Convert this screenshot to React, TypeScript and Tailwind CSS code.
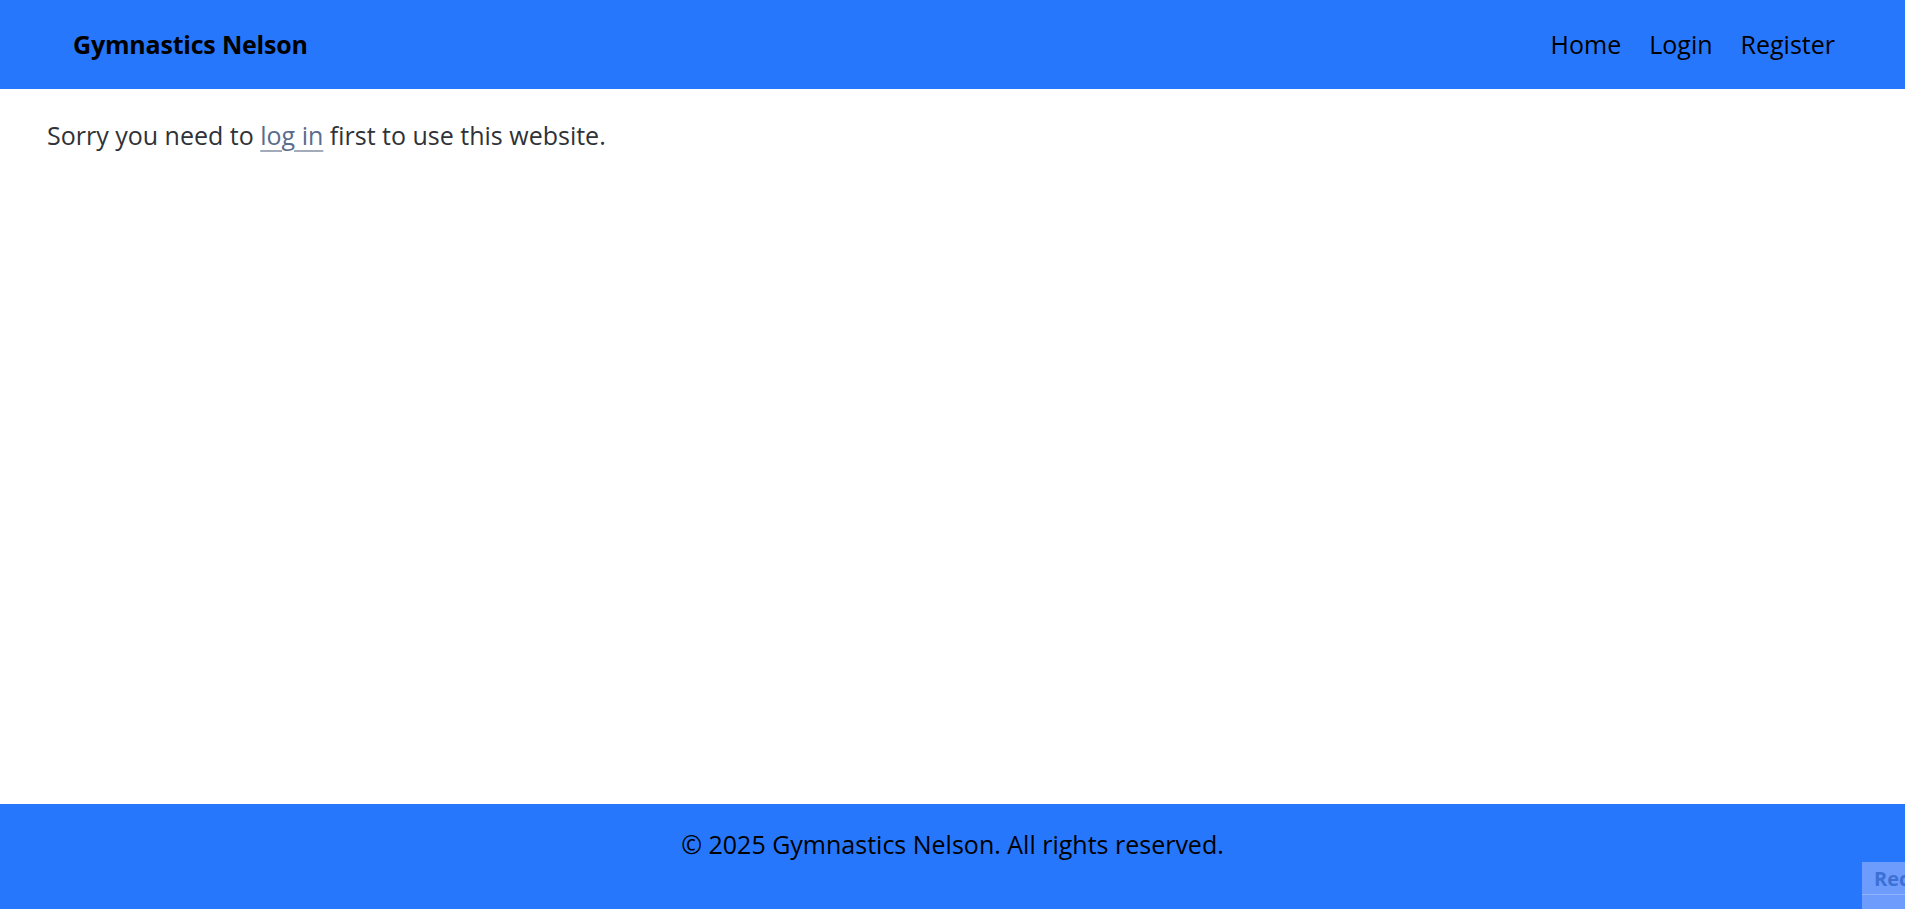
import React from 'react';

const NavLink: React.FC<{ label: string }> = ({ label }) => (
  <a href="#" className="text-black no-underline">
    {label}
  </a>
);

export default function App() {
  return (
    <div className="min-h-screen flex flex-col bg-white font-['Open_Sans',sans-serif]">
      <header className="h-[89px] shrink-0 bg-[#2777fc] flex items-center justify-between pl-[73px] pr-[70px]">
        <div className="text-[25px] font-bold text-black tracking-[-0.2px]">Gymnastics Nelson</div>
        <nav className="flex items-center gap-[28px] text-[25px] text-black">
          <NavLink label="Home" />
          <NavLink label="Login" />
          <NavLink label="Register" />
        </nav>
      </header>

      <main className="flex-1 px-[47px] pt-[27px]">
        <p className="text-[25px] leading-[38px] text-[#2f3237]">
          Sorry you need to{' '}
          <a href="#" className="text-[#5a6c8c] underline decoration-[#a3abbb] underline-offset-[5px]">
            log in
          </a>{' '}
          first to use this website.
        </p>
      </main>

      <footer className="h-[105px] shrink-0 bg-[#2777fc] pt-[21px] text-center">
        <p className="text-[25px] leading-[38px] text-black">© 2025 Gymnastics Nelson. All rights reserved.</p>
      </footer>

      {/* recaptcha badge peeking in from the right edge */}
      <div className="fixed right-0 bottom-0 w-[43px] h-[47px] bg-[#6d9cfc] overflow-hidden">
        <div className="h-[33px] border-b border-[#8fb3fc] pl-[12px] pt-[2px] text-[20px] font-bold text-[#3c70d4] whitespace-nowrap">
          Rec
        </div>
      </div>
    </div>
  );
}
